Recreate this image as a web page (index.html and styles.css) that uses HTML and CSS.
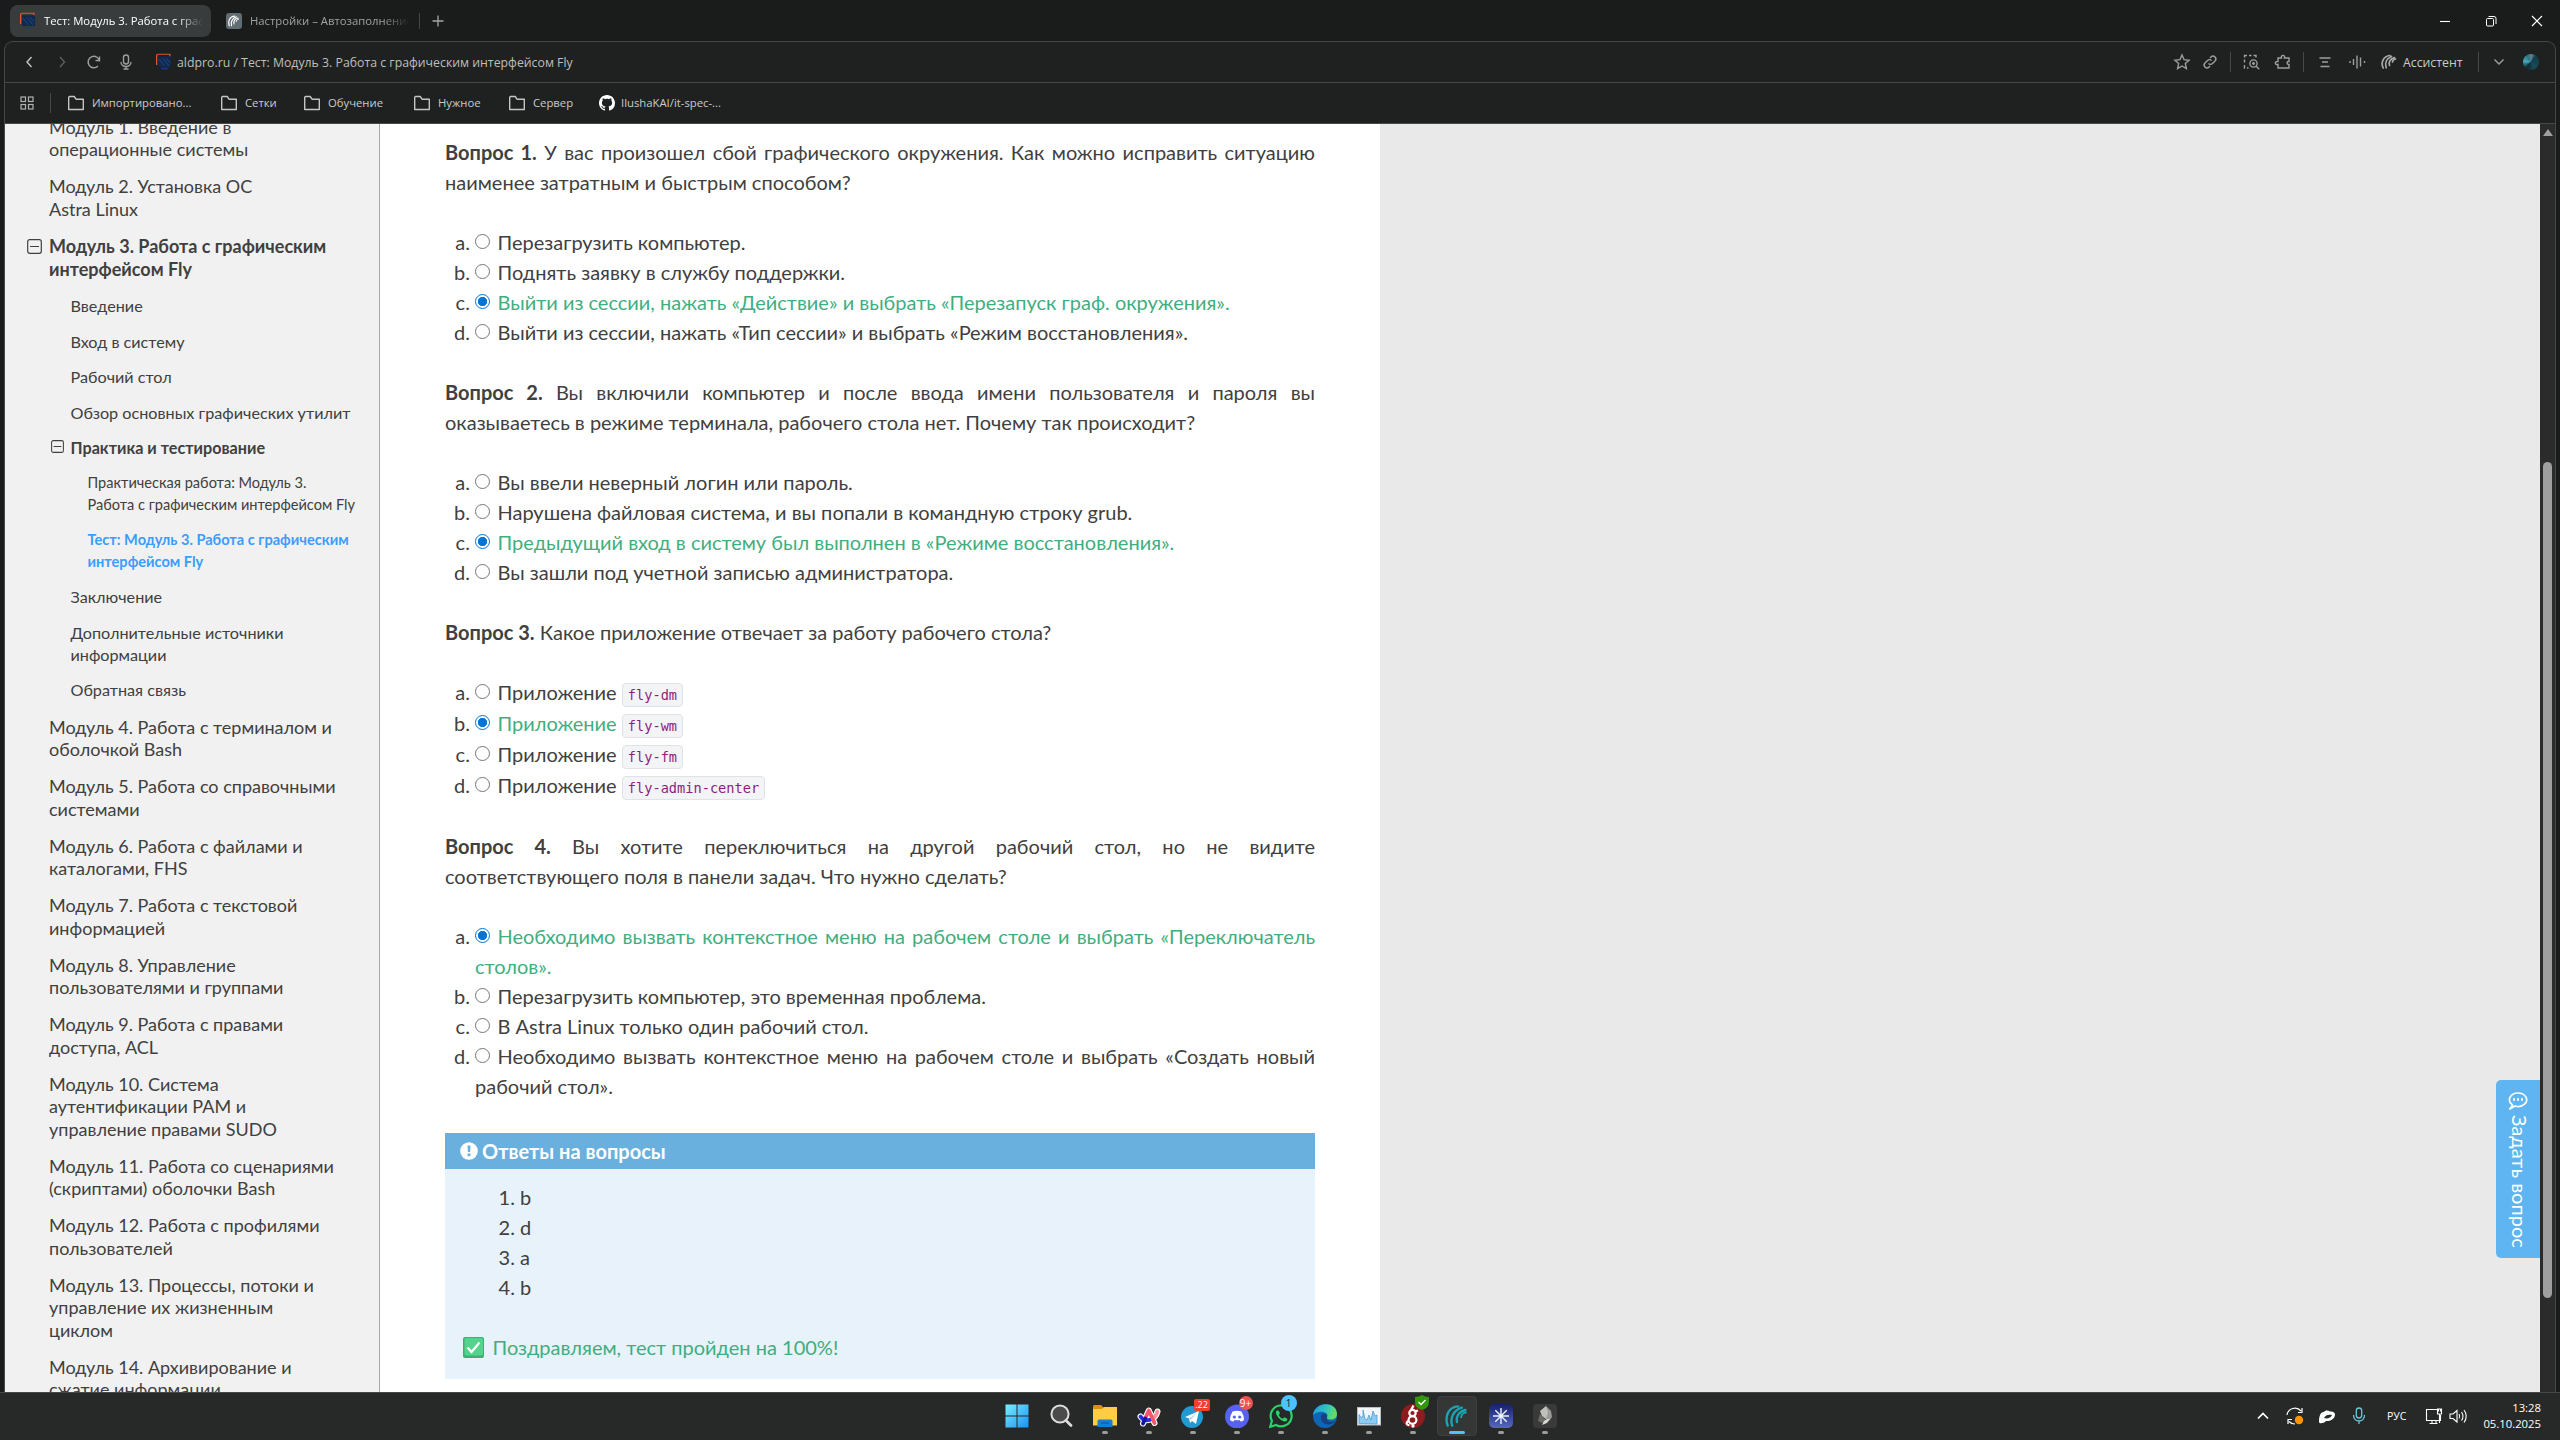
FILE: index.html
```html
<!DOCTYPE html>
<html lang="ru">
<head>
<meta charset="utf-8">
<title>Тест: Модуль 3. Работа с графическим интерфейсом Fly</title>
<link rel="stylesheet" href="styles.css">
</head>
<body>
<svg class="defs" width="0" height="0">
  <defs>
    <symbol id="folder" viewBox="0 0 18 18"><path d="M1.7 3.2v12.3h14.6V5.2H9L7.2 2.5H2.4z" fill="none" stroke="#c4c6c5" stroke-width="1.4" stroke-linejoin="round"/></symbol>
    <symbol id="site" viewBox="0 0 18 24"><path d="M1.5 16V3.5Q1.5 1.6 3.5 1.6H16V5" fill="none" stroke="#e0562c" stroke-width="1.4"/><path d="M3 4.5h14.2v14H3z" fill="#12284c"/><path d="M4 8l6 9M8 7l7 10M12 7l4 6" stroke="#1b4380" stroke-width="1.2"/><path d="M5 19.5h10l-2 2.5H8z" fill="#173c74"/></symbol>
    <symbol id="minus" viewBox="0 0 15 15"><rect x=".7" y=".7" width="13.6" height="13.6" rx="2" fill="none" stroke="#404040" stroke-width="1.2"/><path d="M3 7.5h9" stroke="#404040" stroke-width="1.2"/></symbol>
    <symbol id="arcs" viewBox="0 0 20 20"><g fill="none" stroke="currentColor" stroke-linecap="round"><path d="M2.200 18C-.5 10 3 2.500 11 2" stroke-width="2"/><path d="M6 18C4 12 7 5 14 3" stroke-width="2"/><path d="M10 15c-1-4.500 1.500-8.500 7-10" stroke-width="2"/><path d="M13.500 11c0-2 1.500-3.500 4-4" stroke-width="1.600"/></g></symbol>
  </defs>
</svg>
<div class="screen">
  <header class="tabs">
    <div class="tab tab-active"><svg class="fav" viewBox="0 0 18 24"><use href="#site"/></svg><span class="tab-title">Тест: Модуль 3. Работа с графическим</span></div>
    <div class="tab tab-second"><span class="fav-box"><svg width="12" height="14" viewBox="0 0 20 20"><use href="#arcs"/></svg></span><span class="tab-title">Настройки – Автозаполнение</span></div>
    <span class="tab-divider"></span>
    <svg class="plus" width="12" height="12" viewBox="0 0 12 12"><path d="M6 .5v11M.5 6h11" stroke="#a5a7a6" stroke-width="1.300"/></svg>
    <div class="window-controls">
      <svg width="12" height="12" viewBox="0 0 12 12"><path d="M1 6.500h10" stroke="#fff" stroke-width="1.100"/></svg>
      <svg width="12" height="12" viewBox="0 0 12 12"><g fill="none" stroke="#fff"><rect x="1.500" y="3.500" width="7" height="7.500" rx="1"/><path d="M3.500 1.500h5.500q2 0 2 2V9"/></g></svg>
      <svg width="12" height="12" viewBox="0 0 12 12"><path d="M1 1l10 10M11 1L1 11" stroke="#fff" stroke-width="1.200"/></svg>
    </div>
  </header>

  <div class="window">
    <div class="toolbar">
      <div class="nav">
        <svg viewBox="0 0 24 24"><path d="M13.500 7l-4.500 5 4.500 5" stroke="#c4c6c5"/></svg>
        <svg viewBox="0 0 24 24"><path d="M10 7l4.500 5-4.500 5" stroke="#5d5f5e"/></svg>
        <svg viewBox="0 0 24 24"><path d="M17.500 11.500a5.700 5.700 0 1 0-1.600 4.500M17.500 6.500v4h-4"/></svg>
        <svg viewBox="0 0 24 24"><rect x="9.500" y="5" width="5" height="9" rx="2.500"/><path d="M7 12c0 6 10 6 10 0M12 16.500V19M9.500 19h5"/></svg>
      </div>
      <div class="address"><svg class="fav" viewBox="0 0 18 24"><use href="#site"/></svg><span>aldpro.ru / Тест: Модуль 3. Работа с графическим интерфейсом Fly</span></div>
      <div class="tools">
        <svg class="w28" viewBox="0 0 24 24"><path d="M12 5l2.100 4.700 5 .5-3.800 3.400 1.100 5L12 16l-4.400 2.600 1.100-5L4.900 10.200l5-.5z"/></svg>
        <svg class="w28" viewBox="0 0 24 24"><path d="M10.500 13.500a2.800 2.800 0 0 0 4 0l2.500-2.500a2.800 2.800 0 0 0-4-4l-1 1M13.500 10.500a2.800 2.800 0 0 0-4 0L7 13a2.800 2.800 0 0 0 4 4l1-1"/></svg>
        <i class="sep sep-a"></i>
        <svg class="w31" viewBox="0 0 24 24"><path d="M5.500 18h-.5v-3M5 12.500v-3M5 7.500V5.500h2.500M9.500 5.500h2.500M14 5.500h2.500V7.500M7.500 18h1.500"/><circle cx="14" cy="13.500" r="3.600"/><path d="M16.700 16.200l3 3M14 12v3M12.500 13.500h3"/></svg>
        <svg class="w32" viewBox="0 0 24 24"><path d="M7 8h3.500c-1-3.500 4-3.500 3 0H18v3.500c-2.500-1-2.500 3.500 0 3V18H7v-3.500c-3.500 1-3.500-3.500 0-3z"/></svg>
        <i class="sep sep-b"></i>
        <svg class="w36" viewBox="0 0 24 24"><path d="M6.500 8h11M9 12h6M7.500 16.500h9"/></svg>
        <svg class="w28" viewBox="0 0 24 24"><path d="M5 11v2M8.500 9v6M12 5.500v13M15.500 7.500v9M19.500 11v2"/></svg>
        <svg class="brand" viewBox="0 0 24 24"><g stroke="#a9abaa" stroke-width="1.700" stroke-linecap="round"><path d="M6.200 18C3.500 12.500 6.500 6 13 5.500M9.200 17.800C7.500 13 9.500 8.500 14.500 6.500M12.500 15.500c-1-3.500.5-6.500 5-8M15.500 12c0-1.500 1-2.500 3-3"/></g></svg>
        <span class="assistant">Ассистент</span>
        <i class="sep sep-c"></i>
        <svg class="w24" viewBox="0 0 24 24"><path d="M7.500 9.500L12 14l4.500-4.500"/></svg>
        <span class="globe"></span>
      </div>
    </div>
    <div class="bookmarks">
      <svg class="apps" width="16" height="16" viewBox="0 0 16 16"><g fill="none" stroke="#b0b2b1" stroke-width="1.200"><rect x="2" y="2" width="4.500" height="4.500"/><rect x="9.500" y="2" width="4.500" height="4.500"/><rect x="2" y="9.500" width="4.500" height="4.500"/><rect x="9.500" y="9.500" width="4.500" height="4.500"/></g></svg>
      <i class="sep"></i>
      <span class="mark m1"><svg width="18" height="18"><use href="#folder"/></svg>Импортировано...</span>
      <span class="mark m2"><svg width="18" height="18"><use href="#folder"/></svg>Сетки</span>
      <span class="mark m3"><svg width="18" height="18"><use href="#folder"/></svg>Обучение</span>
      <span class="mark m4"><svg width="18" height="18"><use href="#folder"/></svg>Нужное</span>
      <span class="mark m5"><svg width="18" height="18"><use href="#folder"/></svg>Сервер</span>
      <span class="mark m6"><svg width="16" height="16" viewBox="0 0 16 16"><path fill="#fff" d="M8 0C3.580 0 0 3.580 0 8c0 3.540 2.290 6.530 5.470 7.590.4.070.55-.17.55-.38 0-.19-.01-.82-.01-1.490-2.010.37-2.530-.49-2.690-.94-.09-.23-.48-.94-.82-1.130-.28-.15-.68-.52-.01-.53.63-.01 1.080.58 1.230.82.72 1.210 1.870.87 2.330.66.070-.52.28-.87.51-1.070-1.780-.2-3.640-.89-3.640-3.950 0-.87.31-1.590.82-2.150-.08-.2-.36-1.020.08-2.120 0 0 .67-.21 2.200.82.64-.18 1.320-.27 2-.27s1.360.09 2 .27c1.530-1.040 2.200-.82 2.200-.82.44 1.100.16 1.920.08 2.120.51.56.82 1.270.82 2.150 0 3.070-1.870 3.750-3.650 3.950.29.25.54.73.54 1.480 0 1.070-.01 1.930-.01 2.200 0 .21.150.46.55.38A8.013 8.013 0 0 0 16 8c0-4.420-3.580-8-8-8z"/></svg>IlushaKAI/it-spec-...</span>
    </div>

    <div class="page">
      <nav class="sidebar">
        <ul class="toc">
          <li><a>Модуль 1. Введение в<br>операционные системы</a></li>
          <li><a>Модуль 2. Установка ОС<br>Astra Linux</a></li>
          <li><a class="open"><svg width="15" height="15"><use href="#minus"/></svg><span>Модуль 3. Работа с графическим<br>интерфейсом Fly</span></a>
            <ul class="sub">
              <li><a>Введение</a></li>
              <li><a>Вход в систему</a></li>
              <li><a>Рабочий стол</a></li>
              <li><a>Обзор основных графических утилит</a></li>
              <li><a class="open"><svg width="13" height="13" viewBox="0 0 15 15"><use href="#minus"/></svg><span>Практика и тестирование</span></a>
                <ul class="sub2">
                  <li><a>Практическая работа: Модуль 3.<br>Работа с графическим интерфейсом Fly</a></li>
                  <li><a class="here">Тест: Модуль 3. Работа с графическим<br>интерфейсом Fly</a></li>
                </ul>
              </li>
              <li><a>Заключение</a></li>
              <li><a>Дополнительные источники<br>информации</a></li>
              <li><a>Обратная связь</a></li>
            </ul>
          </li>
          <li><a>Модуль 4. Работа с терминалом и<br>оболочкой Bash</a></li>
          <li><a>Модуль 5. Работа со справочными<br>системами</a></li>
          <li><a>Модуль 6. Работа с файлами и<br>каталогами, FHS</a></li>
          <li><a>Модуль 7. Работа с текстовой<br>информацией</a></li>
          <li><a>Модуль 8. Управление<br>пользователями и группами</a></li>
          <li><a>Модуль 9. Работа с правами<br>доступа, ACL</a></li>
          <li><a>Модуль 10. Система<br>аутентификации PAM и<br>управление правами SUDO</a></li>
          <li><a>Модуль 11. Работа со сценариями<br>(скриптами) оболочки Bash</a></li>
          <li><a>Модуль 12. Работа с профилями<br>пользователей</a></li>
          <li><a>Модуль 13. Процессы, потоки и<br>управление их жизненным<br>циклом</a></li>
          <li><a>Модуль 14. Архивирование и<br>сжатие информации</a></li>
        </ul>
      </nav>

      <main class="content">
        <p><b>Вопрос 1.</b> У вас произошел сбой графического окружения. Как можно исправить ситуацию наименее затратным и быстрым способом?</p>
        <ol class="options">
          <li><i class="radio"></i>Перезагрузить компьютер.</li>
          <li><i class="radio"></i>Поднять заявку в службу поддержки.</li>
          <li><i class="radio on"></i><span class="right">Выйти из сессии, нажать «Действие» и выбрать «Перезапуск граф. окружения».</span></li>
          <li><i class="radio"></i>Выйти из сессии, нажать «Тип сессии» и выбрать «Режим восстановления».</li>
        </ol>
        <p><b>Вопрос 2.</b> Вы включили компьютер и после ввода имени пользователя и пароля вы оказываетесь в режиме терминала, рабочего стола нет. Почему так происходит?</p>
        <ol class="options">
          <li><i class="radio"></i>Вы ввели неверный логин или пароль.</li>
          <li><i class="radio"></i>Нарушена файловая система, и вы попали в командную строку grub.</li>
          <li><i class="radio on"></i><span class="right">Предыдущий вход в систему был выполнен в «Режиме восстановления».</span></li>
          <li><i class="radio"></i>Вы зашли под учетной записью администратора.</li>
        </ol>
        <p><b>Вопрос 3.</b> Какое приложение отвечает за работу рабочего стола?</p>
        <ol class="options options-code">
          <li><i class="radio"></i>Приложение <code>fly-dm</code></li>
          <li><i class="radio on"></i><span class="right">Приложение</span> <code>fly-wm</code></li>
          <li><i class="radio"></i>Приложение <code>fly-fm</code></li>
          <li><i class="radio"></i>Приложение <code>fly-admin-center</code></li>
        </ol>
        <p><b>Вопрос 4.</b> Вы хотите переключиться на другой рабочий стол, но не видите соответствующего поля в панели задач. Что нужно сделать?</p>
        <ol class="options">
          <li><i class="radio on"></i><span class="right">Необходимо вызвать контекстное меню на рабочем столе и выбрать «Переключатель столов».</span></li>
          <li><i class="radio"></i>Перезагрузить компьютер, это временная проблема.</li>
          <li><i class="radio"></i>В Astra Linux только один рабочий стол.</li>
          <li><i class="radio"></i>Необходимо вызвать контекстное меню на рабочем столе и выбрать «Создать новый рабочий стол».</li>
        </ol>
        <section class="note">
          <h4><svg width="18" height="18" viewBox="0 0 18 18"><circle cx="9" cy="9" r="8.800" fill="#fff"/><path d="M7.500 3.500h3l-.4 6.500H7.900zM7.600 11.500h2.800v2.700H7.600z" fill="#6ab0de"/></svg>Ответы на вопросы</h4>
          <ol class="answers"><li>b</li><li>d</li><li>a</li><li>b</li></ol>
          <p class="congrats"><svg width="21" height="21" viewBox="0 0 21 21"><rect width="21" height="21" rx="2" fill="#3fae76"/><rect x="1.500" y="1" width="18.500" height="17.500" rx="1.500" fill="#52d48c"/><path d="M4.500 10.500l4 4.500 8-9.500" fill="none" stroke="#fff" stroke-width="2.200"/></svg>Поздравляем, тест пройден на 100%!</p>
        </section>
      </main>

      <aside class="rest">
        <div class="ask">
          <svg width="20" height="18" viewBox="0 0 20 18"><path d="M4.500 13.200C-1.500 8.500 2 1 10 1s11 7.500 6.500 11.200c-3 2.800-7 2.600-9.500 1.800L1.800 17z" fill="none" stroke="#fff" stroke-width="1.700" stroke-linejoin="round"/><path d="M5 6.200h2v2.500H5zM9 6.200h2v2.500H9zM13 6.200h2v2.500h-2z" fill="#fff"/></svg>
          <span>Задать вопрос</span>
        </div>
      </aside>
      <div class="scrollbar"><i class="up"></i><i class="thumb"></i></div>
    </div>
  </div>

  <footer class="taskbar">
    <div class="dock">
      <div class="app"><svg viewBox="0 0 24 24"><defs><linearGradient id="win" x1="0" y1="0" x2="1" y2="1"><stop offset="0" stop-color="#7cecff"/><stop offset="1" stop-color="#1593f5"/></linearGradient></defs><path d="M.5.500h11v11H.5zM12.500.500h11v11h-11zM.5 12.500h11v11H.5zM12.500 12.500h11v11h-11z" fill="url(#win)"/></svg></div>
      <div class="app"><svg viewBox="0 0 24 24"><circle cx="11" cy="10" r="8.600" fill="#4b4b4b" stroke="#dcdcdc" stroke-width="2"/><path d="M17 16.500l5 5" stroke="#dcdcdc" stroke-width="2.800" stroke-linecap="round"/></svg></div>
      <div class="app run"><svg viewBox="0 0 24 24"><path d="M0 2.500Q0 1 1.500 1H8l2.500 2.500V7H0z" fill="#d8930a"/><path d="M0 5h9l2-2h13v18.500H0z" fill="#ffcc44"/><path d="M4.500 23v-6q0-1.500 1.500-1.500h12q1.500 0 1.500 1.500v6z" fill="#1180d4"/><path d="M8 19h8" stroke="#0a5aa0" stroke-width="1.200"/></svg></div>
      <div class="app run"><svg viewBox="0 0 24 24"><g fill="none" stroke-linecap="round" stroke-linejoin="round"><path d="M3.500 12.500q3.500 5.500 10 3 5.500-2 7-8M6 19.500L11.800 6.500 17.500 19" stroke="#fff" stroke-width="6"/><path d="M20.500 7.500q-1.500 6-7 8" stroke="#ff8f98" stroke-width="3.800"/><path d="M3.500 12.500q3.500 5.500 10 3" stroke="#2030e8" stroke-width="3.800"/><path d="M8 15l3.800-8.500L17.500 19" stroke="#f4576b" stroke-width="3.800"/><path d="M6 19.500l2.300-5" stroke="#14169c" stroke-width="3.800"/></g></svg></div>
      <div class="app run"><svg viewBox="0 0 24 24"><circle cx="11" cy="13" r="11" fill="#2299d0"/><path d="M4 13l14-6-3 13-4-3-2 2-1-4.500z" fill="#fff"/><path d="M8 14.500l7-5-5 6.500" fill="#b7d7ea"/></svg><b class="badge square">.22</b></div>
      <div class="app run"><svg viewBox="0 0 24 24"><circle cx="12" cy="12.500" r="12" fill="#5662f0"/><path d="M7.500 7.500q4.500-1.500 9 0 2.500 4 2.500 8.500-2 1.500-3.500 1.500l-1-1.500q-2.500.7-5 0l-1 1.500q-1.500 0-3.500-1.500 0-4.500 2.500-8.500z" fill="#fff"/><circle cx="9.300" cy="13" r="1.600" fill="#5662f0"/><circle cx="14.700" cy="13" r="1.600" fill="#5662f0"/></svg><b class="badge">9+</b></div>
      <div class="app run"><svg viewBox="0 0 24 24"><path d="M1.200 22.800l1.700-6A10.500 10.500 0 1 1 7 21z" fill="none" stroke="#25d366" stroke-width="2.200"/><path d="M7 7.500c-1 4 5.500 10.500 9.500 10 2-.5 2-2.500 1.500-3l-2.700-1.300-1.500 1.500c-1.800-.5-3.500-2.500-4-4l1.200-1.300L9.800 6.800Q8 6 7 7.500z" fill="#25d366"/></svg><b class="badge blue">1</b></div>
      <div class="app run"><svg viewBox="0 0 24 24"><defs><linearGradient id="eg" x1="0" y1="0" x2="1" y2=".3"><stop offset="0" stop-color="#209ae0"/><stop offset=".6" stop-color="#31c4c0"/><stop offset="1" stop-color="#62dd62"/></linearGradient></defs><circle cx="12" cy="12" r="12" fill="#0f65b8"/><path d="M0 11C2-3 24-3 24 10c0 5-5 6.500-9 5-2-.8-.5-1.500-.5-3.500 0-4-9-6-14.500-.5z" fill="url(#eg)"/><path d="M9 10c-3 4 0 11 7 10.500 2.500 0 5-1.500 6.500-4-3 2-9 2-9-2.500L14 11q-2-2.500-5-1z" fill="#17427f"/></svg></div>
      <div class="app run"><svg viewBox="0 0 24 24"><rect x=".5" y="3.500" width="23" height="17.500" fill="#f3f6f9" stroke="#b9bfc5"/><path d="M2 19.500v-9l2 3 2-1V6l2 9 2 1 2-5 2 5 2-9 2 5 2-1v9z" fill="#8ecbf3" stroke="#3d94ce" stroke-width=".7"/></svg></div>
      <div class="app run"><svg viewBox="0 0 24 24"><circle cx="12" cy="12" r="12" fill="#8e1b1d"/><g fill="none" stroke="#fff" stroke-width="2.200"><circle cx="11.500" cy="9" r="3.200"/><circle cx="11.500" cy="16" r="3.900"/><path d="M10 6l2.500-4.500M7.500 17c-3 1.500-2 4.500 1 4M14 7.500l3-1"/></g><circle cx="12" cy="22" r="1.700" fill="#fff"/></svg><svg class="shield" viewBox="0 0 14 15"><path d="M7 0q3 2 7 2v5q0 6-7 8-7-2-7-8V2q4 0 7-2z" fill="#32960f"/><path d="M3.500 7L6 9.500 10.500 5" fill="none" stroke="#fff" stroke-width="1.300"/></svg></div>
      <div class="app run current"><svg class="big" viewBox="0 0 20 20"><use href="#arcs"/></svg></div>
      <div class="app run"><svg viewBox="0 0 24 24"><defs><linearGradient id="st" x1="0" y1="0" x2="0" y2="1"><stop offset="0" stop-color="#17206b"/><stop offset="1" stop-color="#5669bd"/></linearGradient></defs><rect width="24" height="24" rx="5" fill="url(#st)"/><path d="M12 4v16M4 12h16M6.300 6.300l11.400 11.400M17.700 6.300L6.300 17.700" stroke="#e9f2ff" stroke-width="1.400"/></svg></div>
      <div class="app run"><svg viewBox="0 0 24 24"><rect width="24" height="24" rx="4" fill="#3a3a3a"/><path d="M13 2l5 5 1 6-3 4-4-3-2-5z" fill="#9a9b98"/><path d="M13 2L7 7l2 5 4 3 2-7z" fill="#bfc0bd"/><path d="M7 10l6 6-1 4-7-3z" fill="#6a6d64"/><path d="M17 15l-3 4-5 2 2-4 3-2z" fill="#d5d8d0"/></svg></div>
    </div>
    <div class="tray">
      <svg class="t-up" viewBox="0 0 24 24"><path d="M7 14.500l5-5 5 5" stroke-width="1.700"/></svg>
      <svg viewBox="0 0 24 24"><path d="M4 11a8 8 0 0 1 14-4M19 4v4.500h-4M5 20v-4.500h4M6 17.500a8 8 0 0 0 6 2.500" stroke-width="1.200"/><circle cx="16" cy="16" r="4.200" fill="#ff9500" stroke="none"/></svg>
      <svg viewBox="0 0 24 24"><path d="M4 18c0-5 1-10 5-10 1-2 4-2 6-.5 2 0 5 .5 5 3 0 5-6 7-9 6.500-2 2.500-7 3-7 1z" fill="#fff" stroke="none"/><path d="M9 14c1-3 5-4 8-3-1 3-5 4-8 3z" fill="#2a2a2a" stroke="none"/></svg>
      <svg viewBox="0 0 24 24"><g stroke="#6ac6da" stroke-width="1.300"><rect x="9.300" y="4" width="5.400" height="10" rx="2.700"/><path d="M6.500 11c0 8 11 8 11 0M12 17v3"/></g></svg>
      <span class="lang">РУС</span>
      <svg viewBox="0 0 24 24" class="t-net"><path d="M15 5.500H4.500v11H18.500V11M7.500 19.500h8M10 16.500v3M14 16.500v3M15.500 5h4v5h-4zM17.500 10v9M16.500 5v2.500M18.500 5v2.500" stroke-width="1.100"/></svg>
      <svg viewBox="0 0 24 24"><path d="M4 10v4.500h3l4 3.500V6.500L7 10zM13 10q1.500 2.200 0 4.500M15.500 8q3 4.200 0 8.500M18 6q4.500 6.200 0 12.500" stroke-width="1.100"/></svg>
      <div class="clock"><span>13:28</span><span>05.10.2025</span></div>
    </div>
  </footer>
</div>
</body>
</html>
```
FILE: styles.css
```css
* { box-sizing: border-box; }
html, body { margin: 0; height: 100%; overflow: hidden; }
body { font-family: Lato, "Noto Sans", sans-serif; color: #404040; background: #1a1c1b; }
ul, ol { margin: 0; padding: 0; }
ul { list-style: none; }
p { margin: 0; }
svg { flex: none; display: block; }
.defs { position: absolute; }
.screen { width: 2560px; height: 1440px; display: flex; flex-direction: column; }

/* tab strip */
.tabs { height: 41px; display: flex; align-items: center; padding-left: 10px; font: 11.3px "Open Sans", "Noto Sans", sans-serif; flex: none; }
.tab { display: flex; align-items: center; height: 32px; width: 201px; padding: 0 8px 0 9px; border-radius: 8px; gap: 8px; color: #a0a2a1; }
.tab-active { background: #393c3d; color: #fff; }
.tab-second { width: 206px; padding: 0 8px 0 15px; gap: 8px; }
.tab-title { flex: 1; overflow: hidden; white-space: nowrap; -webkit-mask-image: linear-gradient(90deg, #000 calc(100% - 26px), transparent); mask-image: linear-gradient(90deg, #000 calc(100% - 26px), transparent); }
.fav { width: 17px; height: 22px; transform: scaleY(.82); }
.fav-box { width: 16px; height: 16px; border-radius: 3px; background: #626d73; color: #fff; display: grid; place-items: center; }
.tab-divider { width: 1px; height: 16px; background: #454746; margin: 0 12px 0 2px; }
.window-controls { margin-left: auto; display: flex; gap: 34px; padding-right: 17px; }

/* browser window */
.window { width: 2552px; margin-left: 4px; flex: 1; min-height: 0; border: 1px solid #464848; border-bottom: 0; border-radius: 9px 9px 0 0; background: #1f2120; display: flex; flex-direction: column; overflow: hidden; }
.toolbar { height: 41px; display: flex; align-items: center; border-bottom: 1px solid #464848; font: 12.3px "Open Sans", "Noto Sans", sans-serif; color: #bdbfbe; flex: none; }
.toolbar svg:not(.fav) { height: 24px; fill: none; stroke: #9d9f9e; stroke-width: 1.4; }
.nav { display: flex; gap: 8px; padding-left: 13px; }
.nav svg { width: 24px; }
.address { display: flex; align-items: center; gap: 5px; margin-left: 17px; }
.tools { display: flex; align-items: center; margin-left: auto; padding-right: 12px; }
.w24 { width: 24px; margin-left: 8px; }
.w28 { width: 28px; }
.w31 { width: 31px; }
.w32 { width: 32px; }
.w36 { width: 36px; }
.brand { width: 24px; margin-left: 6px; }
.assistant { width: 61px; margin-left: 2px; color: #c9cbca; white-space: nowrap; }
.sep { width: 1px; height: 20px; background: #464848; flex: none; }
.sep-a { margin: 0 5px 0 6px; }
.sep-b { margin: 0 3px 0 4px; }
.sep-c { margin-left: 14px; }
.globe { width: 16px; height: 16px; margin: 0 4px 0 12px; border-radius: 50%; background: conic-gradient(from 40deg, #113c4b, #1a4a57 30%, #0d2a35 50%, #49a9bd 65%, #2a7486 80%, #62808a 90%, #113c4b); }
.bookmarks { height: 41px; flex: none; display: flex; align-items: center; border-bottom: 1px solid #464848; font: 11.3px "Open Sans", "Noto Sans", sans-serif; color: #c9cbca; padding: 0 0 1px 14px; }
.bookmarks .sep { margin: 0 16px 0 15px; }
.mark { display: flex; align-items: center; gap: 7px; white-space: nowrap; }
.m1 { width: 153px; }
.m2 { width: 83px; }
.m3 { width: 110px; }
.m4 { width: 95px; }
.m5 { width: 91px; }
.m6 { gap: 6px; }

/* document */
.page { flex: 1; min-height: 0; display: flex; overflow: hidden; background: #e9e9e9; }
.sidebar { width: 375px; border-right: 1px solid #a8a8a8; background: #f1f1f1; overflow: hidden; flex: none; }
.toc { margin-top: -15.7px; }
.toc a { display: block; white-space: nowrap; font-size: 18px; line-height: 22.5px; padding: 7.28px 0 7.28px 44px; }
.toc a.open { display: flex; font-weight: 700; padding: 8px 0 8.5px 21.5px; gap: 7.5px; }
.toc a.open svg { margin-top: 3.5px; }
.toc .sub a { font-size: 16.2px; line-height: 22.3px; padding: 6.55px 0 6.55px 65.5px; }
.toc .sub a.open { padding-left: 45.5px; gap: 7px; }
.toc .sub .sub2 a { font-size: 14.58px; line-height: 22.6px; padding: 5.9px 0 5.9px 82.500px; }
.toc a.here { color: #3a9dff; font-weight: 700; }
.content { width: 1000px; background: #fff; padding: 13px 65px 0; font-size: 20px; line-height: 30px; text-align: justify; flex: none; }
.content > p, .options { margin-bottom: 30px; }
.options { list-style: lower-alpha; padding-left: 30px; }
.options-code li { height: 31px; }
.options:has(+ .note) { margin-bottom: 32px; }
.radio { display: inline-block; width: 15px; height: 15px; border: 1.3px solid #767676; border-radius: 50%; margin-right: 7.5px; vertical-align: 1px; background: #fff; }
.radio.on { border: 1.3px solid #0075d6; background: radial-gradient(circle, #0075d6 4.300px, #fff 5px); }
.right { color: #3fae80; }
code { display: inline-block; height: 23.5px; line-height: 22.5px; padding: 0 5px; border: 1px solid #dfe2e6; border-radius: 4px; background: #f2f4f6; color: #8f1d80; font-family: "DejaVu Sans Mono", monospace; font-size: 13.65px; }
.note { background: #e7f2fa; height: 246px; }
.note h4 { margin: 0; height: 36px; background: #6ab0de; color: #fff; font-size: 20px; display: flex; align-items: center; gap: 4px; padding: 0 0 1px 15px; }
.answers { padding: 12.500px 0 30px 75px; }
.congrats { display: flex; align-items: center; gap: 9px; padding-left: 17.500px; color: #3fae80; }
.congrats svg { margin-top: 1px; }
.rest { flex: 1; display: flex; justify-content: flex-end; align-items: flex-start; padding-top: 956px; }
.ask { width: 44px; height: 178px; background: #5eb5f1; border-radius: 5px 0 0 5px; color: #fff; font-size: 20px; display: flex; flex-direction: column; align-items: center; padding-top: 12px; gap: 5px; }
.ask span { writing-mode: vertical-rl; line-height: 24px; white-space: nowrap; margin-left: 4px; }
.scrollbar { width: 15px; background: #2b2b2b; display: flex; flex-direction: column; align-items: center; padding-top: 5px; flex: none; }
.up { border: 5px solid transparent; border-top: 0; border-bottom: 7px solid #9f9f9f; }
.thumb { width: 9px; height: 836px; margin-top: 326px; border-radius: 5px; background: #9f9f9f; }

/* taskbar */
.taskbar { height: 48px; flex: none; background: #272828; border-top: 1px solid #474848; display: flex; align-items: center; padding: 0 0 1px 994.500px; color: #fff; font: 11.3px "Open Sans", "Noto Sans", sans-serif; }
.dock { display: flex; }
.app { width: 44px; height: 40px; display: grid; place-items: center; position: relative; }
.app svg { width: 24px; height: 24px; }
.run::after { content: ""; position: absolute; left: 19px; bottom: 2px; width: 6px; height: 3px; border-radius: 2px; background: #9b9b9b; }
.app.current { width: 40px; margin: 0 2px; background: #353636; border: 1px solid #3e3f3f; border-radius: 4px; color: #18a5b4; }
.current::after { left: 11px; bottom: 1px; width: 16px; background: #4cc2ff; }
.badge { position: absolute; left: 24px; top: 0; min-width: 14px; height: 14px; border-radius: 7px; background: #ef5350; font-size: 10px; line-height: 14px; font-weight: 400; text-align: center; }
.badge.square { left: 23px; top: 3px; width: 16px; height: 12px; line-height: 12px; border-radius: 2px; background: #f23c34; font-size: 9px; }
.badge.blue { left: 22px; top: -1px; width: 16px; height: 16px; line-height: 16px; border-radius: 8px; background: #4cc2ff; color: #12222c; }
.app .shield { position: absolute; width: 14px; height: 15px; left: 24px; top: -1px; }
.tray { margin-left: auto; display: flex; align-items: center; padding-right: 19px; gap: 8px; }
.tray svg { width: 24px; height: 24px; fill: none; stroke: #fff; }
.lang { margin: 0 4px 0 8px; width: 20px; font-size: 10.500px; }
.tray .t-net { margin: 0 -8px 0 3px; }
.clock { width: 63px; display: flex; flex-direction: column; text-align: right; line-height: 16px; }
```
